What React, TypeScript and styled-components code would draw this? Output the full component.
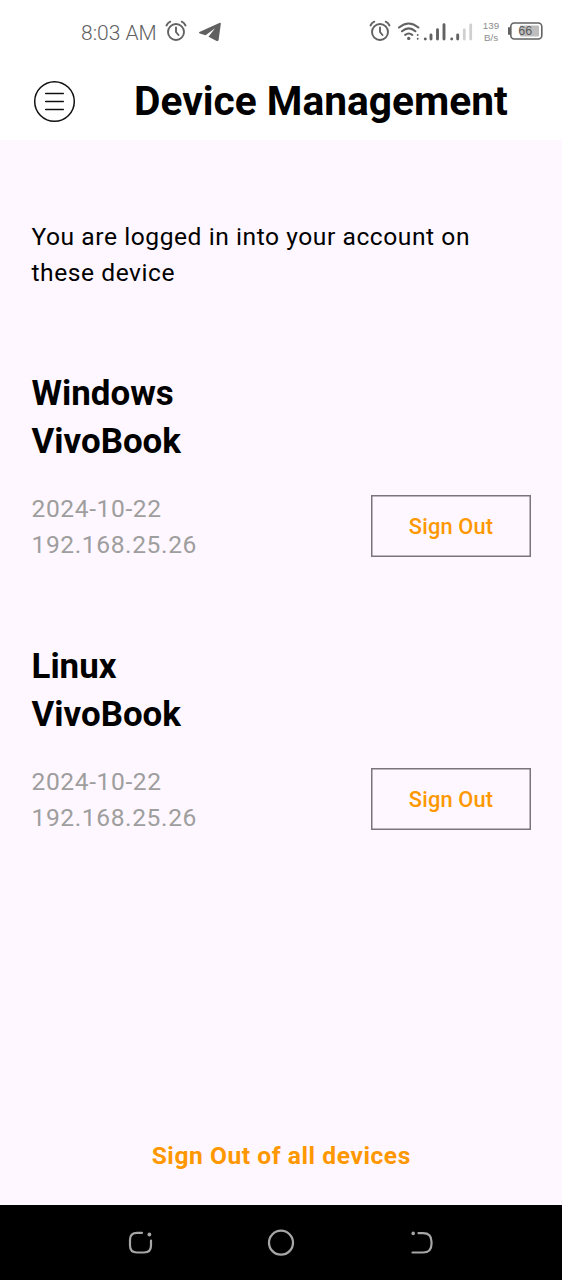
import React from "react";
import styled, { createGlobalStyle } from "styled-components";

const GlobalStyle = createGlobalStyle`
  * { box-sizing: border-box; }
  body { margin: 0; font-family: Roboto, sans-serif; color: #000; background: #fef7ff; }
`;

const Screen = styled.div`
  width: 562px;
  height: 1280px;
  display: flex;
  flex-direction: column;
  background: #fef7ff;
`;

const StatusBar = styled.div`
  height: 64px;
  flex: none;
  background: #fff;
  display: flex;
  justify-content: space-between;
  padding: 0 19px 0 81px;
  color: #626262;
`;

const StatusGroup = styled.div`
  display: flex;
  align-items: center;
  height: 62px;
`;

const Clock = styled.span`
  font-family: Roboto, sans-serif;
  font-weight: 300;
  font-size: 21px;
  line-height: 24px;
  padding-top: 3px;
  width: 83px;
  white-space: nowrap;
`;

const NetSpeed = styled.div`
  display: flex;
  flex-direction: column;
  align-items: center;
  width: 20px;
  margin: 0 6px 0 8px;
  padding-top: 1px;
  font-family: "Liberation Sans", sans-serif;
  font-size: 9.8px;
  line-height: 12px;
  color: #8c8c8c;
`;

const Battery = styled.svg`
  display: block;
  font-family: "Liberation Sans", sans-serif;
`;

const AppBar = styled.header`
  height: 76px;
  flex: none;
  background: #fff;
  display: flex;
  align-items: center;
  padding: 0 0 1px 33px;
`;

const MenuButton = styled.button`
  border: 0;
  padding: 0;
  background: none;
  width: 43px;
  height: 43px;
  display: block;
`;

const Title = styled.h1`
  margin: 0 0 2px 58px;
  font-size: 40.7px;
  line-height: 48px;
  font-weight: 700;
  white-space: nowrap;
`;

const Body = styled.main`
  flex: 1;
  display: flex;
  flex-direction: column;
  padding: 79px 31px 0 31.5px;
`;

const Intro = styled.p`
  margin: 0 0 79px;
  font-size: 24.6px;
  line-height: 36px;
  letter-spacing: 0.55px;
`;

const Device = styled.section`
  height: 273px;
`;

const DeviceName = styled.h2`
  margin: 0;
  font-size: 34.9px;
  line-height: 48px;
  font-weight: 700;
`;

const DeviceRow = styled.div`
  display: flex;
  justify-content: space-between;
  margin-top: 25px;
`;

const Meta = styled.div`
  font-size: 24.6px;
  line-height: 36px;
  letter-spacing: 0.6px;
  color: #9e9e9e;
`;

const SignOut = styled.button`
  width: 160px;
  height: 62px;
  margin-top: 4px;
  padding: 2px 0 0;
  border: 0;
  box-shadow: inset 0 0 0 1.5px #79747e;
  background: transparent;
  font: 500 21.8px/30px Roboto, sans-serif;
  letter-spacing: 0.15px;
  color: #ff9800;
`;

const SignOutAll = styled.button`
  margin: auto auto 31px;
  border: 0;
  padding: 0;
  background: none;
  font: 700 24.6px/36px Roboto, sans-serif;
  letter-spacing: 0.55px;
  color: #ff9800;
  white-space: nowrap;
`;

const NavBar = styled.nav`
  height: 75px;
  flex: none;
  background: #000;
  display: flex;
  justify-content: space-between;
  align-items: center;
  padding: 0 126px;
`;

const Glyph = styled.svg<{ $ml?: number }>`
  display: block;
  flex: none;
  margin-left: ${(p) => p.$ml ?? 0}px;
`;

const AlarmIcon = ({ ml }: { ml?: number }) => (
  <Glyph $ml={ml} width="22" height="22" viewBox="0 0 22 22" fill="none" stroke="#626262" strokeWidth="1.9" strokeLinecap="round">
    <circle cx="11" cy="12" r="8" />
    <path d="M11 7.5V12l2.5 3M1.5 5.5C2.3 3.7 3.7 2.4 5.3 1.7M20.5 5.5C19.7 3.7 18.3 2.4 16.7 1.7" />
  </Glyph>
);

const devices = [
  { os: "Windows", name: "VivoBook", date: "2024-10-22", ip: "192.168.25.26" },
  { os: "Linux", name: "VivoBook", date: "2024-10-22", ip: "192.168.25.26" },
];

export default function App() {
  return (
    <>
      <GlobalStyle />
      <Screen>
        <StatusBar>
          <StatusGroup>
            <Clock>8:03 AM</Clock>
            <AlarmIcon ml={1} />
            <Glyph $ml={11} width="24" height="22" viewBox="0 0 24 22">
              <path d="M1.4 12 21.3 2.9Q23 2.3 22.8 4L20.6 20Q20.200 21.600 18.700 20.900L10.500 16.700 17 8.300 7.600 15.200 1.700 13.500Q.2 12.800 1.400 12Z" fill="#606060" />
            </Glyph>
          </StatusGroup>
          <StatusGroup>
            <AlarmIcon />
            <Glyph $ml={6} width="76" height="22" viewBox="0 0 76 22" fill="none" stroke="#626262" strokeWidth="2.1" strokeLinecap="round">
              <path d="M2 7.5Q11.7-.5 21.4 7.5M5 11.2Q11.7 5.5 18.4 11.2M8.2 14.8Q11.7 12.2 15.2 14.8" />
              <circle cx="11.7" cy="18.4" r="1.7" fill="#626262" stroke="none" />
              <path d="M20.7 14.9v.1M20.7 18.6v.1" strokeWidth="1.9" />
              <path d="M28.3 18.9v.1M34 15v4M40.5 9.8v9.2M47 4.8v14.2M54.7 18.9v.1M60.7 15v4" strokeWidth="2.9" />
              <path d="M67.3 9.8v9.2M73.7 4.8v14.2" strokeWidth="2.8" stroke="#d0d0d0" />
            </Glyph>
            <NetSpeed>
              <span>139</span>
              <span>B/s</span>
            </NetSpeed>
            <Battery width="36" height="18" viewBox="0 0 36 18">
              <rect x="3.8" y="1" width="31" height="16" rx="3.5" fill="none" stroke="#626262" strokeWidth="1.6" />
              <rect x="1" y="5" width="2" height="8" rx="1" fill="#626262" />
              <rect x="13" y="3.5" width="19" height="11" rx="1" fill="#bdbdbd" />
              <text x="18.3" y="13.2" textAnchor="middle" fontSize="12.5" fill="#5a5a5a">66</text>
            </Battery>
          </StatusGroup>
        </StatusBar>
        <AppBar>
          <MenuButton aria-label="Menu">
            <Glyph width="43" height="43" viewBox="0 0 43 43" fill="none" stroke="#111" strokeWidth="1.5" strokeLinecap="round">
              <circle cx="21.5" cy="21.5" r="19.8" />
              <path d="M12.7 13.5h17.6M12.7 21.5h17.6M12.7 29.5h17.6" />
            </Glyph>
          </MenuButton>
          <Title>Device Management</Title>
        </AppBar>
        <Body>
          <Intro>You are logged in into your account on these device</Intro>
          {devices.map((d) => (
            <Device key={d.os}>
              <DeviceName>
                {d.os}
                <br />
                {d.name}
              </DeviceName>
              <DeviceRow>
                <Meta>
                  {d.date}
                  <br />
                  {d.ip}
                </Meta>
                <SignOut>Sign Out</SignOut>
              </DeviceRow>
            </Device>
          ))}
          <SignOutAll>Sign Out of all devices</SignOutAll>
        </Body>
        <NavBar>
          <Glyph width="28" height="28" viewBox="0 0 28 28" fill="none" stroke="#a6a6a6" strokeWidth="2.2" strokeLinecap="round">
            <path d="M16 3.8H11Q4 3.8 4 10.8V16.5Q4 23.5 11 23.5H18Q25 23.5 25 16.5V11.5" />
            <circle cx="23.4" cy="5.5" r="1.9" fill="#a6a6a6" stroke="none" />
          </Glyph>
          <Glyph width="28" height="28" viewBox="0 0 28 28" fill="none" stroke="#a6a6a6" strokeWidth="2.3">
            <circle cx="14" cy="13.7" r="12" />
          </Glyph>
          <Glyph width="28" height="28" viewBox="0 0 28 28" fill="none" stroke="#a6a6a6" strokeWidth="2.2" strokeLinecap="round">
            <path d="M10.5 4.2H15Q23.500 4.200 23.500 12.700V15Q23.500 23.500 15 23.500H4.500" />
            <circle cx="5.200" cy="4.400" r="1.8" fill="#a6a6a6" stroke="none" />
          </Glyph>
        </NavBar>
      </Screen>
    </>
  );
}
